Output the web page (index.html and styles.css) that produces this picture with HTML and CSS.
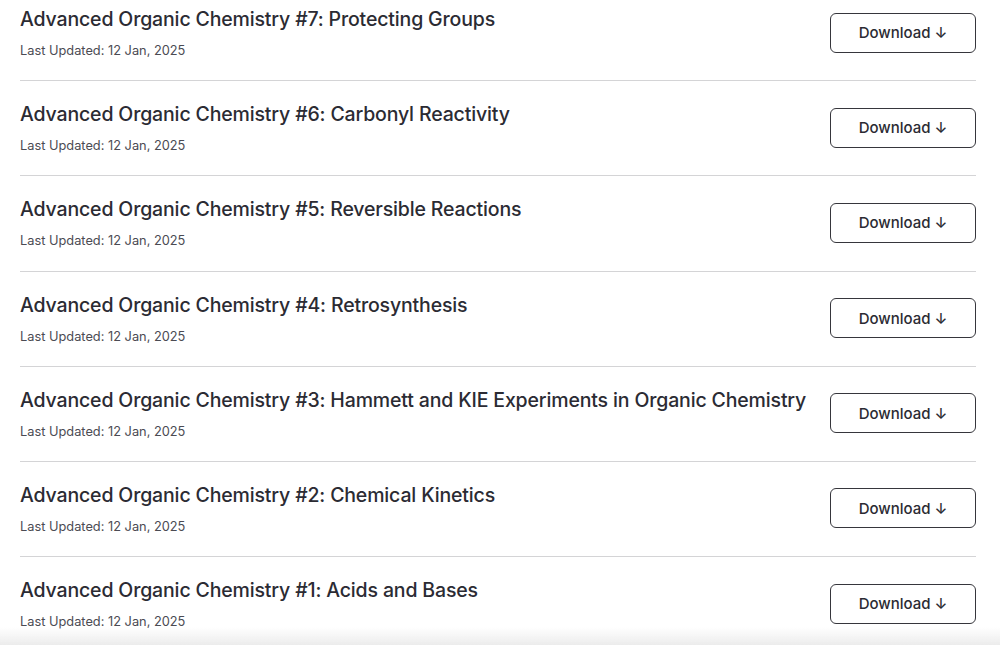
FILE: index.html
```html
<!DOCTYPE html>
<html lang="en">
<head>
<meta charset="utf-8">
<title>Advanced Organic Chemistry</title>
<link rel="stylesheet" href="styles.css">
</head>
<body>
<main class="list">
  <div class="row">
    <div class="info">
      <h2 class="title">Advanced Organic Chemistry #7: Protecting Groups</h2>
      <p class="date">Last Updated: 12 Jan, 2025</p>
    </div>
    <button class="btn">Download ↓</button>
  </div>
  <div class="row">
    <div class="info">
      <h2 class="title">Advanced Organic Chemistry #6: Carbonyl Reactivity</h2>
      <p class="date">Last Updated: 12 Jan, 2025</p>
    </div>
    <button class="btn">Download ↓</button>
  </div>
  <div class="row">
    <div class="info">
      <h2 class="title">Advanced Organic Chemistry #5: Reversible Reactions</h2>
      <p class="date">Last Updated: 12 Jan, 2025</p>
    </div>
    <button class="btn">Download ↓</button>
  </div>
  <div class="row">
    <div class="info">
      <h2 class="title">Advanced Organic Chemistry #4: Retrosynthesis</h2>
      <p class="date">Last Updated: 12 Jan, 2025</p>
    </div>
    <button class="btn">Download ↓</button>
  </div>
  <div class="row">
    <div class="info">
      <h2 class="title">Advanced Organic Chemistry #3: Hammett and KIE Experiments in Organic Chemistry</h2>
      <p class="date">Last Updated: 12 Jan, 2025</p>
    </div>
    <button class="btn">Download ↓</button>
  </div>
  <div class="row">
    <div class="info">
      <h2 class="title">Advanced Organic Chemistry #2: Chemical Kinetics</h2>
      <p class="date">Last Updated: 12 Jan, 2025</p>
    </div>
    <button class="btn">Download ↓</button>
  </div>
  <div class="row">
    <div class="info">
      <h2 class="title">Advanced Organic Chemistry #1: Acids and Bases</h2>
      <p class="date">Last Updated: 12 Jan, 2025</p>
    </div>
    <button class="btn">Download ↓</button>
  </div>
</main>
<div class="fade"></div>
</body>
</html>
```

FILE: styles.css
```css
html, body {
  margin: 0;
  padding: 0;
  background: #ffffff;
  overflow: hidden;
}
body {
  font-family: Inter, "Noto Sans", sans-serif;
  color: #2b2b33;
}
.list {
  margin: -14px 24px 0 20px;
}
.row {
  display: flex;
  align-items: center;
  justify-content: space-between;
  padding: 19px 0 20.2px;
  border-bottom: 1px solid #d4d4d6;
}
.info {
  display: flex;
  flex-direction: column;
  gap: 9px;
  min-width: 0;
}
.title {
  margin: 0;
  font-size: 19.5px;
  line-height: 28px;
  font-weight: 500;
  color: #2b2b33;
  letter-spacing: -0.15px;
  white-space: nowrap;
}
.date {
  margin: 0;
  font-size: 12.8px;
  line-height: 18px;
  color: #4b4b53;
}
.btn {
  width: 146px;
  height: 40px;
  border: 1.5px solid #36363c;
  border-radius: 6px;
  background: #ffffff;
  font-family: Inter, "Noto Sans", sans-serif;
  font-size: 15px;
  font-weight: 500;
  color: #2b2b33;
  flex-shrink: 0;
}
.fade {
  position: fixed;
  left: 0;
  right: 0;
  bottom: 0;
  height: 18px;
  background: linear-gradient(to bottom, rgba(236,236,236,0), rgba(236,236,236,1));
  pointer-events: none;
}
```
